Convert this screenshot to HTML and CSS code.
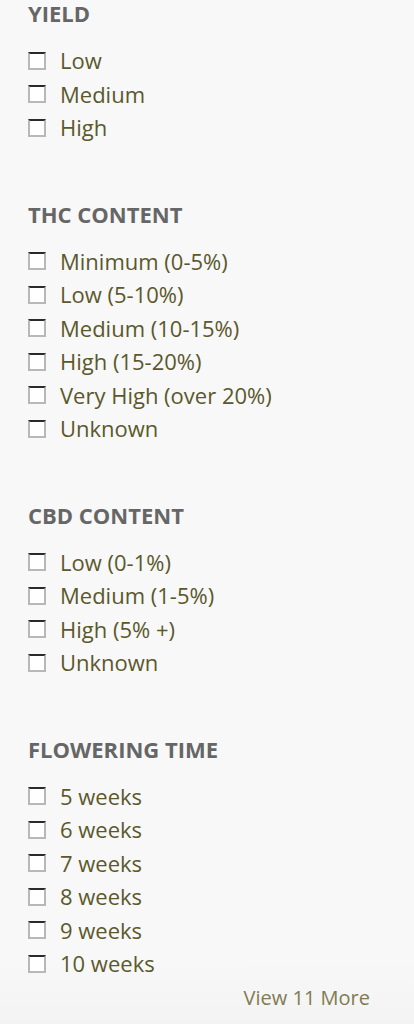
FILE: index.html
```html
<!DOCTYPE html>
<html>
<head>
<meta charset="utf-8">
<link rel="stylesheet" href="styles.css">
</head>
<body>
<div class="panel">
  <section class="group">
    <h3 class="title">YIELD</h3>
    <ul class="list">
      <li class="item"><span class="box"></span><span class="label">Low</span></li>
      <li class="item"><span class="box"></span><span class="label">Medium</span></li>
      <li class="item"><span class="box"></span><span class="label">High</span></li>
    </ul>
  </section>
  <section class="group">
    <h3 class="title">THC CONTENT</h3>
    <ul class="list">
      <li class="item"><span class="box"></span><span class="label">Minimum (0-5%)</span></li>
      <li class="item"><span class="box"></span><span class="label">Low (5-10%)</span></li>
      <li class="item"><span class="box"></span><span class="label">Medium (10-15%)</span></li>
      <li class="item"><span class="box"></span><span class="label">High (15-20%)</span></li>
      <li class="item"><span class="box"></span><span class="label">Very High (over 20%)</span></li>
      <li class="item"><span class="box"></span><span class="label">Unknown</span></li>
    </ul>
  </section>
  <section class="group">
    <h3 class="title">CBD CONTENT</h3>
    <ul class="list">
      <li class="item"><span class="box"></span><span class="label">Low (0-1%)</span></li>
      <li class="item"><span class="box"></span><span class="label">Medium (1-5%)</span></li>
      <li class="item"><span class="box"></span><span class="label">High (5% +)</span></li>
      <li class="item"><span class="box"></span><span class="label">Unknown</span></li>
    </ul>
  </section>
  <section class="group">
    <h3 class="title">FLOWERING TIME</h3>
    <ul class="list">
      <li class="item"><span class="box"></span><span class="label">5 weeks</span></li>
      <li class="item"><span class="box"></span><span class="label">6 weeks</span></li>
      <li class="item"><span class="box"></span><span class="label">7 weeks</span></li>
      <li class="item"><span class="box"></span><span class="label">8 weeks</span></li>
      <li class="item"><span class="box"></span><span class="label">9 weeks</span></li>
      <li class="item"><span class="box"></span><span class="label">10 weeks</span></li>
    </ul>
    <div class="more"><a class="more-link">View 11 More</a></div>
  </section>
</div>
</body>
</html>
```
FILE: styles.css
```css
html, body {
  margin: 0;
  padding: 0;
  background: #f8f8f8;
}
body {
  font-family: "Open Sans", "Liberation Sans", sans-serif;
  width: 414px;
  height: 1024px;
  overflow: hidden;
}
.panel {
  display: flex;
  flex-direction: column;
  gap: 56px;
  padding: 0 0 0 28px;
  height: 1024px;
  box-sizing: border-box;
  background: linear-gradient(to bottom, #f8f8f8 0, #f8f8f8 960px, #f3f3f3 1024px);
}
.group {
  display: flex;
  flex-direction: column;
}
.title {
  margin: 0 0 18px 0;
  height: 26px;
  line-height: 26px;
  font-size: 22px;
  font-weight: 700;
  color: #666666;
}
.list {
  list-style: none;
  margin: 0;
  padding: 0;
}
.item {
  display: flex;
  align-items: center;
  height: 33.5px;
}
.box {
  width: 14px;
  height: 14px;
  background: #fff;
  border: 2px solid #b8b8b8;
  border-top: 2px solid #2a2a2a;
  margin-right: 14px;
  flex: none;
}
.label {
  font-size: 22px;
  color: #5b582c;
  line-height: 33.5px;
}
.more {
  display: flex;
  justify-content: flex-end;
  padding-right: 44px;
  height: 33px;
  align-items: center;
}
.more-link {
  font-size: 20px;
  color: #7f7b52;
}
```
